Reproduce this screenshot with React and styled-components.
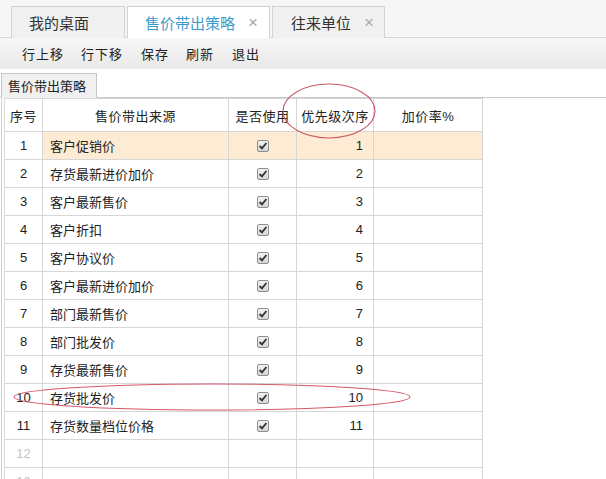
import styled, { createGlobalStyle } from "styled-components";

const GlobalStyle = createGlobalStyle`
  html, body {
    margin: 0;
    padding: 0;
    background: #fff;
    font-family: "Liberation Sans", "Noto Sans CJK SC", sans-serif;
    overflow: hidden;
  }
`;

const Page = styled.div`
  position: relative;
  width: 606px;
  height: 479px;
  overflow: hidden;
`;

const TabBar = styled.div`
  display: flex;
  align-items: flex-end;
  gap: 2px;
  height: 38px;
  padding-left: 11px;
  background: #f6f6f6;
  border-bottom: 1px solid #d6d6d6;
  box-sizing: border-box;
`;

const Tab = styled.div`
  display: flex;
  align-items: center;
  gap: 13px;
  width: ${(p) => p.$w}px;
  height: 32px;
  margin-bottom: -1px;
  padding-left: ${(p) => p.$pl}px;
  box-sizing: border-box;
  border: 1px solid #d2d2d2;
  border-bottom: none;
  background: ${(p) => (p.$active ? "#fff" : "#f0f0f0")};
  color: ${(p) => (p.$active ? "#3d9bcc" : "#333")};
  font-size: 15px;
`;

const Close = styled.span`
  color: #aaa;
  font-size: 17px;
  line-height: 1;
`;

const Toolbar = styled.div`
  display: flex;
  align-items: center;
  height: 31px;
  padding-left: 22px;
  background: linear-gradient(#f7f7f7, #e8e8e8);
  border-bottom: 1px solid #fff;
`;

const ToolBtn = styled.span`
  font-size: 13px;
  color: #222;
  margin-right: ${(p) => p.$mr || 0}px;
  letter-spacing: 1px;
`;

const SubTabs = styled.div`
  display: flex;
  align-items: flex-end;
  height: 27px;
  padding-left: 1px;
  border-bottom: 1px solid #c9c9c9;
  background: #fff;
`;

const SubTab = styled.div`
  height: 25px;
  width: 96px;
  box-sizing: border-box;
  margin-bottom: -1px;
  border: 1px solid #c6c6c6;
  border-bottom: 1px solid #f0f0f0;
  background: #f0f0f0;
  font-size: 13px;
  color: #222;
  display: flex;
  align-items: center;
  padding-left: 6px;
`;

const GridWrap = styled.div`
  display: flex;
  padding-top: 0;
  padding-left: 2px;
  height: 400px;
  border-left: 1px solid #d0d0d0;
  margin-left: 1px;
  box-sizing: border-box;
`;

const Table = styled.div`
  display: grid;
  grid-template-columns: 38px 186px 68px 77px 109px;
  grid-auto-rows: 28px;
  grid-template-rows: 33px;
  border-left: 1px solid #d6d6d6;
  border-top: 1px solid #d6d6d6;
  align-self: flex-start;
`;

const Cell = styled.div`
  box-sizing: border-box;
  border-right: 1px solid #d6d6d6;
  border-bottom: 1px solid #d6d6d6;
  display: flex;
  align-items: center;
  justify-content: ${(p) => p.$align || "flex-start"};
  padding: 0 ${(p) => (p.$align === "flex-end" ? 10 : 7)}px 0 7px;
  font-size: 13px;
  color: ${(p) => (p.$muted ? "#c4c4c4" : "#222")};
  background: ${(p) => (p.$hl ? "#fdebd3" : "#fff")};
`;

const HeadCell = styled(Cell)`
  justify-content: center;
  padding: 0;
  letter-spacing: 0.5px;
`;

const Check = styled.span`
  width: 12px;
  height: 12px;
  box-sizing: border-box;
  border: 1px solid #8e8e8e;
  border-radius: 2px;
  background: linear-gradient(#f2f2f2, #d6d6d6);
  display: flex;
  align-items: center;
  justify-content: center;
`;

const Overlay = styled.svg`
  position: absolute;
  left: 0;
  top: 0;
  pointer-events: none;
`;

const rows = [
  "客户促销价",
  "存货最新进价加价",
  "客户最新售价",
  "客户折扣",
  "客户协议价",
  "客户最新进价加价",
  "部门最新售价",
  "部门批发价",
  "存货最新售价",
  "存货批发价",
  "存货数量档位价格",
];

const CheckMark = () => (
  <Check>
    <svg width="10" height="10" viewBox="0 0 10 10">
      <path d="M1.6 5 L4 7.4 L8.4 2" fill="none" stroke="#333" strokeWidth="1.8" />
    </svg>
  </Check>
);

export default function App() {
  return (
    <Page>
      <GlobalStyle />
      <TabBar>
        <Tab $w={114} $pl={17}>我的桌面</Tab>
        <Tab $w={143} $pl={17} $active>
          售价带出策略<Close>×</Close>
        </Tab>
        <Tab $w={113} $pl={18}>
          往来单位<Close>×</Close>
        </Tab>
      </TabBar>
      <Toolbar>
        <ToolBtn $mr={17}>行上移</ToolBtn>
        <ToolBtn $mr={18}>行下移</ToolBtn>
        <ToolBtn $mr={17}>保存</ToolBtn>
        <ToolBtn $mr={18}>刷新</ToolBtn>
        <ToolBtn>退出</ToolBtn>
      </Toolbar>
      <SubTabs>
        <SubTab>售价带出策略</SubTab>
      </SubTabs>
      <GridWrap>
        <Table>
          <HeadCell>序号</HeadCell>
          <HeadCell>售价带出来源</HeadCell>
          <HeadCell>是否使用</HeadCell>
          <HeadCell>优先级次序</HeadCell>
          <HeadCell>加价率%</HeadCell>
          {rows.map((name, i) => {
            const hl = i === 0;
            return [
              <Cell key={`n${i}`} $align="center">{i + 1}</Cell>,
              <Cell key={`s${i}`} $hl={hl}>{name}</Cell>,
              <Cell key={`c${i}`} $hl={hl} $align="center"><CheckMark /></Cell>,
              <Cell key={`o${i}`} $hl={hl} $align="flex-end">{i + 1}</Cell>,
              <Cell key={`r${i}`} $hl={hl} />,
            ];
          })}
          {[12, 13].map((n) => [
            <Cell key={`n${n}`} $align="center" $muted>{n}</Cell>,
            <Cell key={`s${n}`} />,
            <Cell key={`c${n}`} />,
            <Cell key={`o${n}`} />,
            <Cell key={`r${n}`} />,
          ])}
        </Table>
      </GridWrap>
      <Overlay width="606" height="479">
        <ellipse cx="329" cy="111" rx="46" ry="27" fill="none" stroke="#c8596a" strokeWidth="1.1" />
        <ellipse cx="212" cy="397" rx="198" ry="13" fill="none" stroke="#d45a6c" strokeWidth="1.1" />
      </Overlay>
    </Page>
  );
}
